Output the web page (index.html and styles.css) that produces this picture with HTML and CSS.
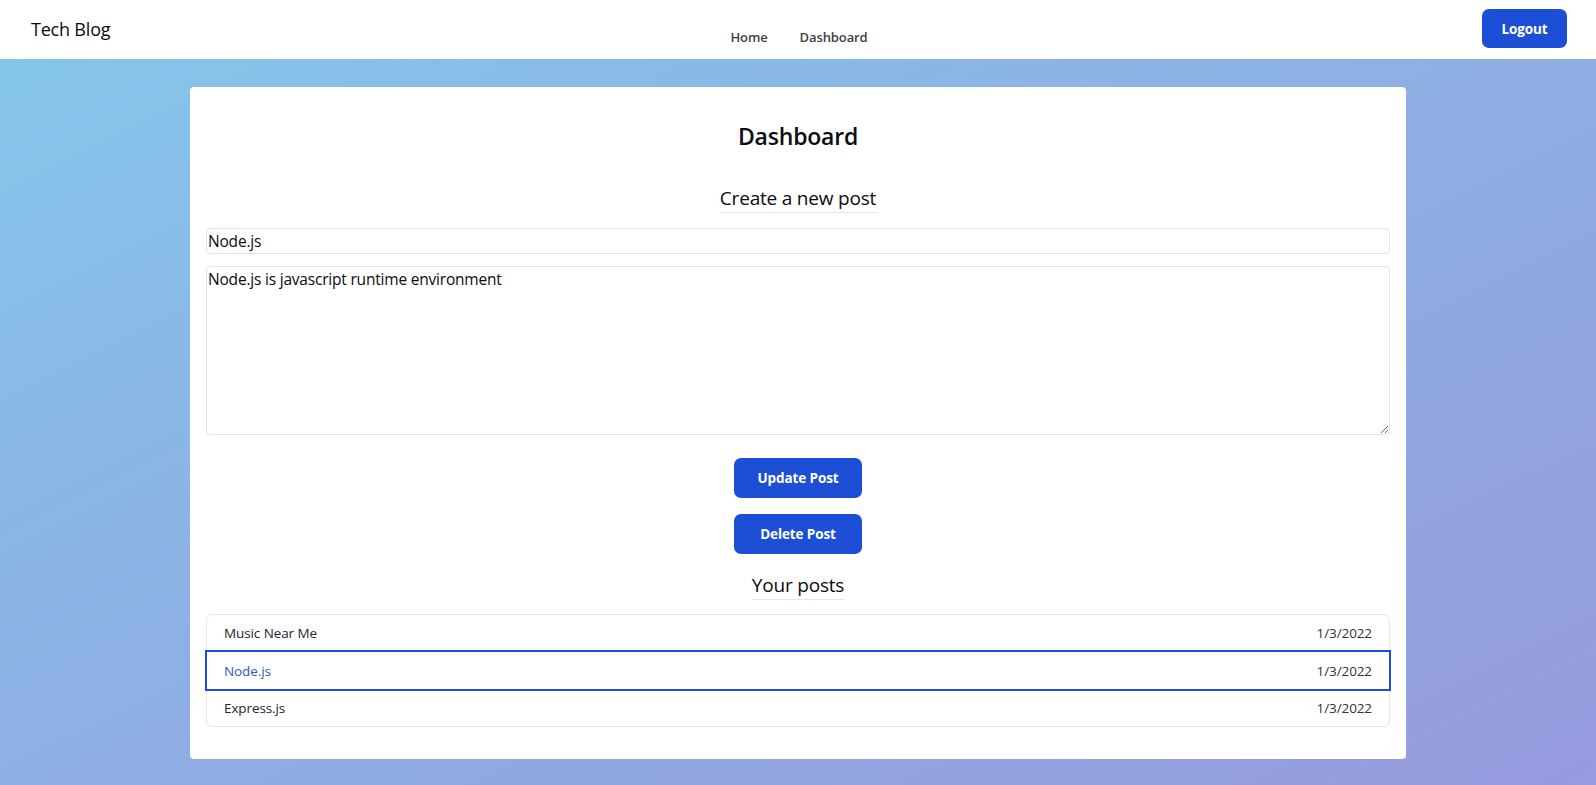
FILE: index.html
```html
<!DOCTYPE html>
<html lang="en">
<head>
<meta charset="utf-8">
<title>Tech Blog</title>
<link rel="stylesheet" href="styles.css">
</head>
<body>
<header class="topbar">
  <div class="brand">Tech Blog</div>
  <nav class="nav">
    <a class="nav-link" href="#">Home</a>
    <a class="nav-link" href="#">Dashboard</a>
  </nav>
  <div class="actions"><button class="btn btn-logout">Logout</button></div>
</header>
<main class="main">
  <section class="card">
    <h1 class="title">Dashboard</h1>
    <div class="section-head"><h2 class="subtitle">Create a new post</h2></div>
    <form class="post-form">
      <input class="field" type="text" value="Node.js">
      <textarea class="field area">Node.js is javascript runtime environment</textarea>
      <div class="form-actions">
        <button type="button" class="btn btn-action">Update Post</button>
        <button type="button" class="btn btn-action">Delete Post</button>
      </div>
    </form>
    <div class="section-head second"><h2 class="subtitle">Your posts</h2></div>
    <ul class="posts">
      <li class="post"><span>Music Near Me</span><span class="date">1/3/2022</span></li>
      <li class="post active"><span>Node.js</span><span class="date">1/3/2022</span></li>
      <li class="post"><span>Express.js</span><span class="date">1/3/2022</span></li>
    </ul>
  </section>
</main>
</body>
</html>
```
FILE: styles.css
```css
* { box-sizing: border-box; }
html, body { margin: 0; padding: 0; }
body {
  font-family: "Open Sans", "Noto Sans", "Liberation Sans", sans-serif;
  color: #111827;
  min-height: 785px;
  background: linear-gradient(to bottom right, #84c7ea 0%, #8db1e4 45%, #969ade 100%);
}
.topbar {
  height: 59px;
  background: #fff;
  display: grid;
  grid-template-columns: 1fr auto 1fr;
  align-items: start;
  padding: 0 29px 0 31px;
}
.brand {
  font-size: 18px;
  line-height: 28px;
  padding-top: 15px;
  font-weight: 500;
  color: #0b0b12;
  letter-spacing: -0.2px;
}
.nav { display: flex; gap: 32px; padding-top: 27px; }
.nav-link {
  font-size: 13px;
  line-height: 20px;
  font-weight: 600;
  color: #3b3f4a;
  text-decoration: none;
  letter-spacing: -0.1px;
}
.actions { display: flex; justify-content: flex-end; padding-top: 9px; }
.btn {
  border: 0;
  background: #1d4fd6;
  color: #fff;
  font-family: inherit;
  font-weight: 700;
  font-size: 13.5px;
  border-radius: 7px;
  cursor: pointer;
  letter-spacing: -0.1px;
}
.btn-logout { width: 85px; height: 39px; }
.main { padding: 28px 0 26px; }
.card {
  width: 1216px;
  margin: 0 auto;
  background: #fff;
  border-radius: 4px;
  padding: 16px 16px 32px;
}
.title {
  margin: 17px 0 0;
  text-align: center;
  font-size: 23px;
  line-height: 32px;
  font-weight: 600;
  color: #0b0b12;
  letter-spacing: -0.2px;
}
.section-head { display: flex; justify-content: center; }
.subtitle {
  margin: 33px 0 0;
  font-size: 19px;
  line-height: 27px;
  font-weight: 400;
  color: #0b0b12;
  border-bottom: 1px solid #e5e7eb;
  letter-spacing: -0.2px;
}
.section-head.second .subtitle { margin-top: 18px; }
.post-form { display: flex; flex-direction: column; margin-top: 15px; }
.field {
  display: block;
  width: 100%;
  border: 1px solid #e3e4e8;
  border-radius: 4px;
  font-family: inherit;
  font-size: 15.5px;
  line-height: 24px;
  padding: 0 1px;
  color: #0b0b12;
  letter-spacing: -0.2px;
  outline: none;
}
.field.area { margin-top: 12px; height: 169px; resize: vertical; }
.form-actions {
  display: flex;
  flex-direction: column;
  align-items: center;
  gap: 16px;
  margin-top: 23px;
}
.btn-action { width: 128px; height: 40px; }
.posts {
  list-style: none;
  margin: 14px 0 0;
  padding: 0;
  border: 1px solid #e5e7eb;
  border-radius: 6px;
}
.post {
  display: flex;
  justify-content: space-between;
  align-items: center;
  height: 36px;
  padding: 0 17px;
  font-size: 13.5px;
  color: #1f2430;
  letter-spacing: -0.1px;
}
.post .date { color: #2d3340; }
.post.active {
  color: #2f55d4;
  outline: 2px solid #1d4fd6;
  outline-offset: -1px;
  margin: 0 -1px;
  padding: 0 18px;
  height: 39px;
}
```
